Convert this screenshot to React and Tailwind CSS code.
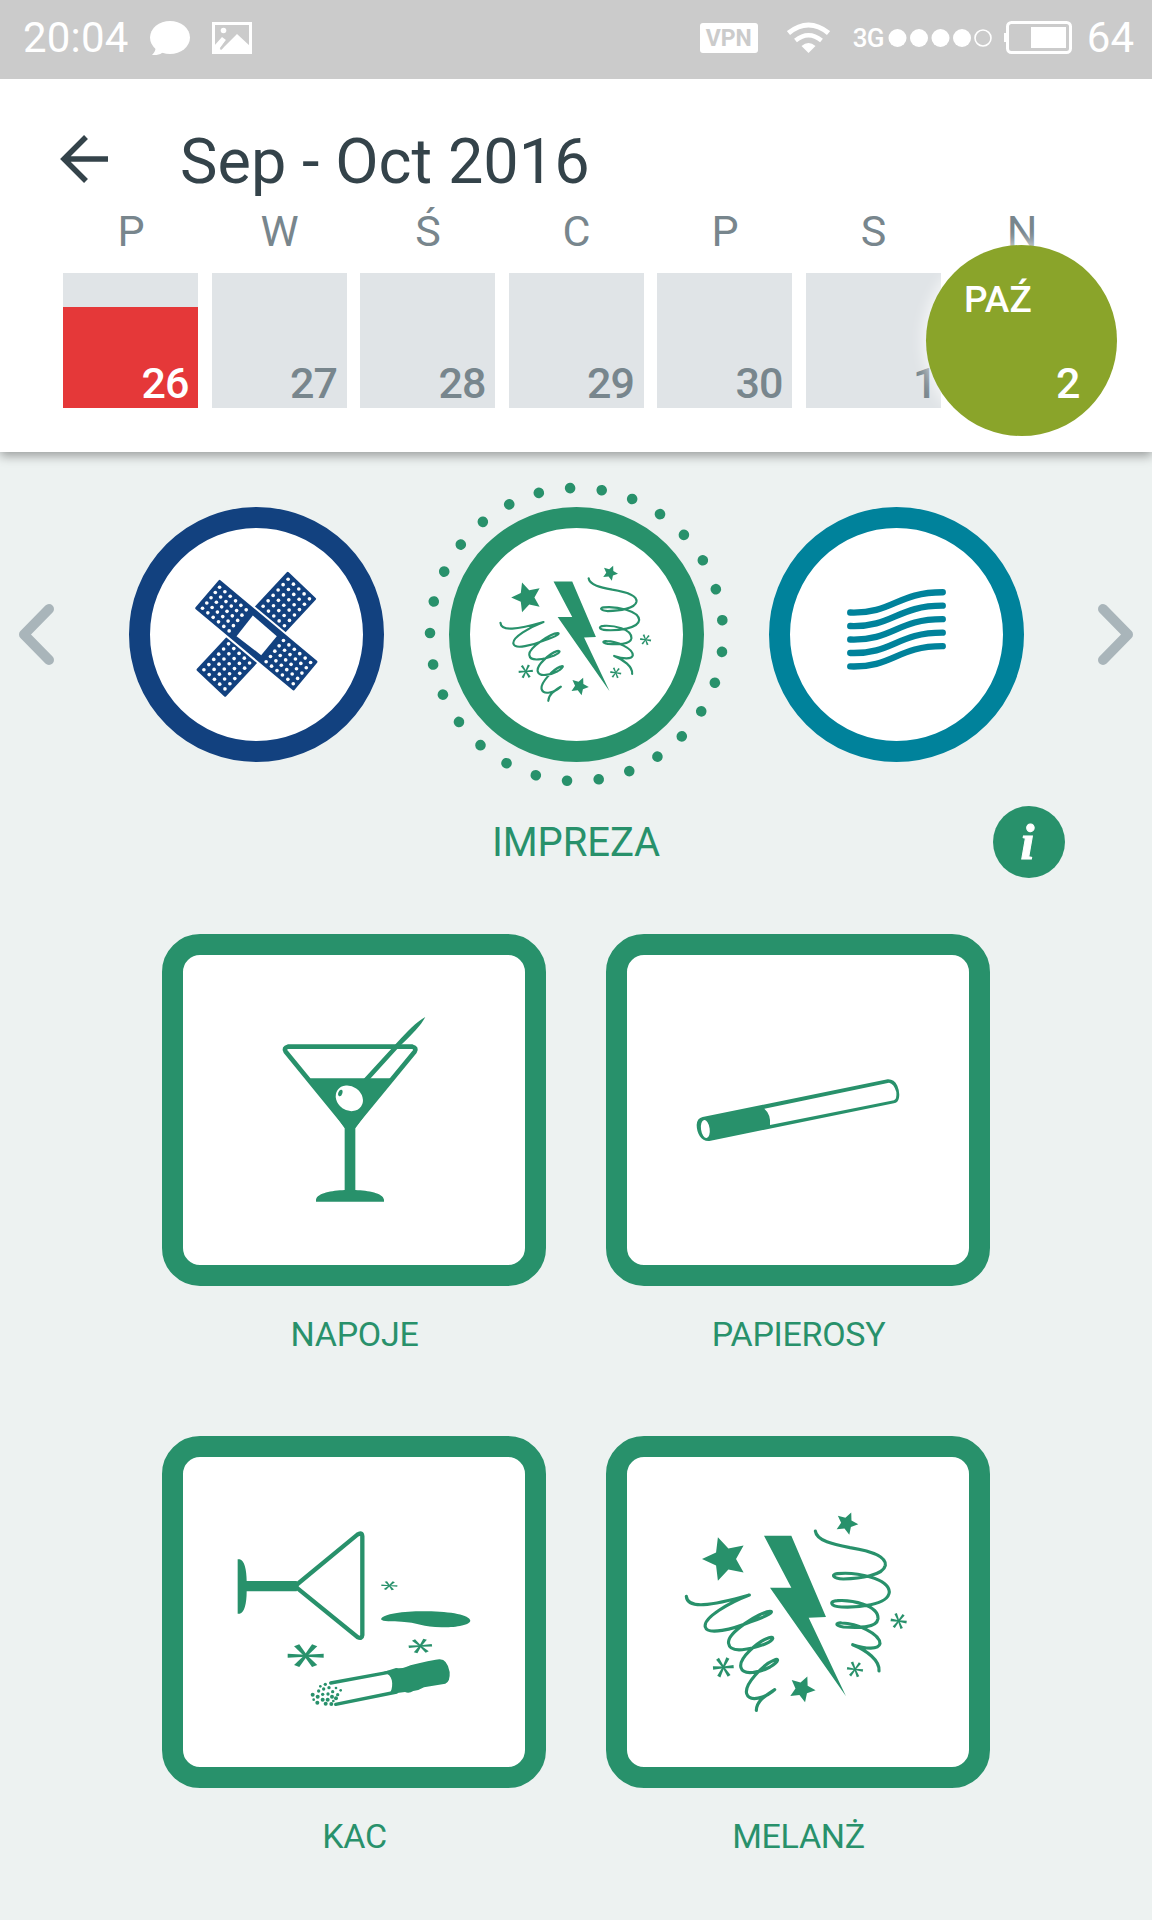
const GREEN = "#28916b";
const NAVY = "#12417f";
const TEAL = "#00829b";

const days = [
  { label: "P", num: "26", filled: true },
  { label: "W", num: "27" },
  { label: "Ś", num: "28" },
  { label: "C", num: "29" },
  { label: "P", num: "30" },
  { label: "S", num: "1" },
  { label: "N", num: "2", month: "PAŹ", selected: true },
];

function StatusBar() {
  return (
    <div className="relative z-10 h-[79px] bg-[#cbcbcb] flex items-center text-white text-[42px] leading-none pl-[23px] pr-[18px] pb-[4px]">
      <span className="w-[127px] pt-px tracking-[0.2px]">20:04</span>
      <svg className="w-10 h-[34px]" viewBox="0 0 40 34" fill="currentColor">
        <ellipse cx="20" cy="16.5" rx="20" ry="16.5" />
        <path d="M6 25 Q6 30 2 34 Q9 35 15 30 Z" />
      </svg>
      <svg className="w-10 h-8 ml-[22px]" viewBox="0 0 40 32">
        <rect x="1.5" y="1.5" width="37" height="29" fill="none" stroke="white" strokeWidth="3" />
        <circle cx="11.5" cy="8.5" r="2.8" fill="white" />
        <path d="M2 24 L10 15 L14 18 L8 26 L10 27 L25 12 L38 24 V31 H2 Z" fill="white" />
        <path d="M8.5 27.5 L14.5 19" stroke="#cbcbcb" strokeWidth="2" />
      </svg>
      <div className="ml-auto flex items-center">
        <span className="w-[58px] h-[30px] rounded-[3px] bg-white text-[#cbcbcb] text-[23px] leading-[31px] font-bold text-center">
          VPN
        </span>
        <svg className="w-[43px] h-8 ml-[29px]" viewBox="0 0 43 32" fill="none" stroke="white" strokeWidth="5">
          <path d="M1.5 11 Q21.5 -5 41.5 11" />
          <path d="M8.5 18.5 Q21.5 8 34.5 18.5" strokeWidth="4.5" />
          <path d="M14.5 24 Q21.5 18 28.5 24 L21.5 31 Z" fill="white" stroke="none" />
        </svg>
        <span className="ml-[23px] w-[34px] text-[26px] font-medium tracking-[-0.8px]">3G</span>
        <svg className="w-[105px] h-5 ml-[1px]" viewBox="0 0 105 20" fill="white">
          {[9.5, 31, 52.5, 74].map((cx) => (
            <circle key={cx} cx={cx} cy="10" r="9" />
          ))}
          <circle cx="95" cy="10" r="8" fill="none" stroke="white" strokeWidth="1.6" />
        </svg>
        <svg className="w-[68px] h-[33px] ml-[11px]" viewBox="0 0 68 33">
          <rect x="0" y="12" width="3" height="9" fill="white" />
          <rect x="3.5" y="1.5" width="63" height="30" rx="4" fill="none" stroke="white" strokeWidth="3" />
          <rect x="27" y="6" width="35" height="21" fill="white" />
        </svg>
        <span className="ml-[15px] pt-px">64</span>
      </div>
    </div>
  );
}

function DayCell({ day }) {
  return (
    <div className="w-[135px] flex flex-col items-center">
      <span className="h-[42px] leading-[42px] text-[43px] text-[#78868d] pl-[1px]">{day.label}</span>
      <div
        className={`relative mt-[21px] w-[135px] h-[135px] flex items-end justify-end pb-[3px] text-[43px] leading-none font-medium tracking-[-1px] ${
          day.selected ? "" : "bg-[#e0e4e7]"
        } ${day.filled || day.selected ? "text-white" : "text-[#78868d]"} ${day.num === "1" ? "pr-[4px]" : "pr-[9.5px]"}`}
      >
        {day.filled && <div className="absolute inset-x-0 bottom-0 h-[101px] bg-[#e53839]" />}
        {day.selected && (
          <>
            <div className="absolute -inset-7 rounded-full bg-[#8aa42a] shadow-[0_0_14px_3px_rgba(255,255,255,0.7)]" />
            <span className="absolute left-[10px] top-[7px] text-[37px] leading-[40px] tracking-normal">{day.month}</span>
          </>
        )}
        <span className="relative">{day.num}</span>
      </div>
    </div>
  );
}

function Header() {
  return (
    <header className="relative h-[373px] bg-white px-[63px] pt-10 shadow-[0_4px_10px_rgba(0,0,0,0.35)]">
      <div className="h-20 flex items-center">
        <svg className="w-12 h-12 -ml-[3px]" viewBox="0 0 48 48" fill="none" stroke="#34434a" strokeWidth="5.5">
          <path d="M48 24 H4 M26 2 L4 24 L26 46" />
        </svg>
        <h1 className="ml-[72px] pt-[5px] text-[63px] leading-none tracking-[0.05px] text-[#34434a]">Sep - Oct 2016</h1>
      </div>
      <div className="mt-[11px] flex justify-between">
        {days.map((d) => (
          <DayCell key={d.num} day={d} />
        ))}
      </div>
    </header>
  );
}

function Star({ cx, cy, r, rotate }) {
  const points = Array.from({ length: 10 }, (_, i) => {
    const a = ((rotate + i * 36) * Math.PI) / 180;
    const len = i % 2 ? r * 0.48 : r;
    return `${(cx + len * Math.cos(a)).toFixed(1)},${(cy + len * Math.sin(a)).toFixed(1)}`;
  });
  return <polygon points={points.join(" ")} />;
}

// six tapered arms; ry flattens the mark so it looks like it lies on the floor
function Burst({ cx, cy, rx, ry = rx, rotate = 0 }) {
  return (
    <g transform={`translate(${cx} ${cy}) scale(${rx / 30} ${ry / 30}) rotate(${rotate})`}>
      {[0, 60, 120, 180, 240, 300].map((a) => (
        <polygon key={a} points="0,-2.6 30,-5 30,5 0,2.6" transform={`rotate(${a})`} />
      ))}
    </g>
  );
}

function PartyArt({ transform }) {
  return (
    <g transform={transform} fill={GREEN}>
      <polygon points="282,106 364,106 468,350 416,352 528,588 300,262 364,262" />
      <Star cx={165} cy={176} r={69} rotate={180} />
      <Star cx={530} cy={69} r={35} rotate={5} />
      <Star cx={396} cy={566} r={41} rotate={5} />
      <Burst cx={160} cy={501} rx={31} rotate={-4} />
      <Burst cx={686} cy={362} rx={24} rotate={8} />
      <Burst cx={555} cy={507} rx={24} rotate={8} />
      <g fill="none" stroke={GREEN} strokeWidth="9.5" strokeLinecap="round" strokeLinejoin="round">
        <path d="M49 288 C52 326 120 318 238 284 C180 306 98 352 106 380 C112 406 190 386 240 365 C300 345 312 333 300 333 C272 334 168 398 176 430 C180 462 244 446 285 431 C318 416 310 408 297 412 C266 422 204 474 213 502 C220 527 270 516 300 500 C330 482 326 472 312 480 C280 492 222 552 230 580 C238 606 286 594 314 568 C286 586 260 602 259 630" />
        <path d="M436 92 C440 122 490 132 540 142 C590 150 650 165 646 195 C640 225 570 235 520 236 C486 234 484 222 502 220 C560 214 656 235 658 275 C655 315 560 322 515 320 C478 318 478 302 502 301 C545 298 626 314 624 355 C620 385 560 382 520 380 C493 376 497 366 515 368 C560 368 630 400 630 430 C625 450 585 445 548 433 C590 450 630 480 627 512" />
      </g>
    </g>
  );
}

// grid of perforation holes: origin plus nu steps of u and nv steps of v
const holes = [
  { o: [864, 328], u: [16, 14.7], v: [-15, 16.2], nu: 5, nv: 6 },
  { o: [685, 522], u: [15.8, 14.4], v: [-14.8, 15.6], nu: 5, nv: 6 },
  { o: [658, 352], u: [16, 13.6], v: [-12.8, 15.8], nu: 6, nv: 5 },
  { o: [850, 512], u: [16.3, 13.2], v: [-13, 16], nu: 6, nv: 5 },
];

function PlasterArt() {
  const pts = holes.flatMap(({ o, u, v, nu, nv }) =>
    Array.from({ length: nu * nv }, (_, k) => {
      const i = k % nu;
      const j = Math.floor(k / nu);
      return [o[0] + i * u[0] + j * v[0], o[1] + i * u[1] + j * v[1]];
    })
  );
  return (
    <svg className="w-full h-full" viewBox="449 174 640 640" strokeLinejoin="round">
      <polygon points="863,310 944,387 675,677 593,600" fill={NAVY} stroke={NAVY} strokeWidth="8" />
      <polygon points="658,334 948,576 880,658 589,415" fill="white" stroke="white" strokeWidth="20" />
      <polygon points="658,334 948,576 880,658 589,415" fill={NAVY} stroke={NAVY} strokeWidth="8" />
      <polygon points="758,437 830,499 783,556 709,499" fill="white" />
      {pts.map(([x, y], i) => (
        <circle key={i} cx={x} cy={y} r="5.5" fill="white" />
      ))}
    </svg>
  );
}

function WavesArt() {
  return (
    <svg className="w-full h-full" viewBox="120 174 640 640" fill="none" stroke={TEAL} strokeWidth="19" strokeLinecap="round">
      {[0, 40.5, 81, 121.5, 162].map((dy) => (
        <path key={dy} d="M301 428 C430 432 440 367 579 367" transform={`translate(0 ${dy})`} />
      ))}
    </svg>
  );
}

function MartiniArt() {
  return (
    <svg className="w-full h-full" viewBox="99 104 1026 930" fill={GREEN}>
      <path
        d="M414 379 H787 Q801 382 794 394 L600 630 L407 394 Q400 382 414 379 Z"
        fill="none"
        stroke={GREEN}
        strokeWidth="14"
      />
      <path d="M480 474 H724 L616 624 V809 C655 811 699 818 702 838 V844 H498 V838 C502 818 545 811 584 809 V624 Z" />
      <path d="M826 290 C800 304 770 335 742 366 L641 476 H660 L752 375 C785 344 812 316 826 290 Z" />
      <ellipse cx="598" cy="534" rx="43" ry="36" transform="rotate(35 598 534)" fill="white" />
      <ellipse cx="571" cy="518" rx="6" ry="10" transform="rotate(20 571 518)" />
    </svg>
  );
}

function CigaretteArt() {
  return (
    <svg className="w-full h-full" viewBox="111 104 1026 930" fill={GREEN}>
      <path d="M338 590 L893 477 Q912 476 922 496 Q930 515 927 532 Q924 547 912 549 L358 662 C335 664 320 640 320 614 Q321 593 338 590 Z" />
      <path d="M523 565 L897 487 Q912 490 919 515 Q921 536 912 540 L540 614 Q543 582 523 565 Z" fill="white" />
      <ellipse cx="346" cy="626" rx="13" ry="27" transform="rotate(-8 346 626)" fill="white" />
    </svg>
  );
}

const ash = [
  [526, 792, 5], [511, 798, 4], [537, 802, 5], [558, 803, 4], [572, 810, 4], [521, 806, 5],
  [506, 812, 5], [548, 814, 5], [488, 823, 6], [518, 822, 5], [534, 821, 5], [563, 823, 5],
  [503, 829, 6], [546, 829, 6], [491, 838, 4], [518, 838, 6], [533, 838, 6], [558, 834, 6],
  [550, 842, 4], [502, 847, 6], [527, 850, 6], [544, 851, 6],
];

function HangoverArt() {
  return (
    <svg className="w-full h-full" viewBox="99 110 1026 930" fill={GREEN}>
      <path d="M263 417 H269 C283 419 290 450 290 482 H440 L446 497 L440 513 H290 C290 550 283 578 269 580 H263 Z" />
      <path
        d="M439 494 L622 343 Q636 334 637 348 V644 Q636 657 622 650 L439 501"
        fill="none"
        stroke={GREEN}
        strokeWidth="13"
      />
      <path d="M693 597 C698 579 770 572 830 573 C905 574 958 584 961 601 C958 616 910 621 875 621 C820 620 800 606 755 604 C725 603 697 605 693 597 Z" />
      <Burst cx={467} cy={706} rx={54} ry={36} />
      <Burst cx={718} cy={496} rx={24} ry={14} rotate={4} />
      <Burst cx={811} cy={677} rx={35} ry={22} rotate={-6} />
      <path d="M542 788 L715 756 M557 852 L740 815" stroke={GREEN} strokeWidth="10" strokeLinecap="round" />
      <path d="M700 755 L738 743 Q755 745 770 739 C800 729 840 721 868 717 Q892 716 899 755 Q901 784 886 790 L822 801 Q808 810 790 812 Q777 820 765 815 L718 821 C730 806 731 770 712 761 Z" />
      {ash.map(([x, y, r]) => (
        <circle key={`${x}-${y}`} cx={x} cy={y} r={r} />
      ))}
    </svg>
  );
}

// 29 dots around the active category
function DotRing() {
  return (
    <svg className="absolute -inset-[46px] w-[305px] h-[305px]" viewBox="-152.5 -152.5 305 305" fill={GREEN}>
      {Array.from({ length: 29 }, (_, i) => (
        <circle key={i} cx="0" cy="-146.5" r="5.3" transform={`rotate(${-2.5 + (i * 360) / 29})`} />
      ))}
    </svg>
  );
}

function Chevron({ flip }) {
  return (
    <svg
      className={`w-[35px] h-[62px] ${flip ? "-scale-x-100" : ""}`}
      viewBox="0 0 35 62"
      fill="none"
      stroke="#a9b5ba"
      strokeWidth="10"
      strokeLinecap="round"
      strokeLinejoin="round"
    >
      <path d="M30 5 L5 30.5 L30 56" />
    </svg>
  );
}

function Carousel() {
  const ring = "relative w-[255px] h-[255px] rounded-full border-[21px] bg-white";
  return (
    <section className="mt-[55px] px-[19px] flex items-center justify-between">
      <Chevron />
      <div className="flex gap-[65px]">
        <div className={`${ring} border-[#12417f]`}>
          <PlasterArt />
        </div>
        <div className={`${ring} border-[#28916b]`}>
          <svg className="w-full h-full" viewBox="180 174 640 640">
            <PartyArt transform="translate(238 262) scale(0.6845)" />
          </svg>
          <DotRing />
        </div>
        <div className={`${ring} border-[#00829b]`}>
          <WavesArt />
        </div>
      </div>
      <Chevron flip />
    </section>
  );
}

const options = [
  { label: "NAPOJE", art: <MartiniArt /> },
  { label: "PAPIEROSY", art: <CigaretteArt /> },
  { label: "KAC", art: <HangoverArt /> },
  {
    label: "MELANŻ",
    art: (
      <svg className="w-full h-full" viewBox="111 110 1026 930">
        <PartyArt transform="translate(240 240)" />
      </svg>
    ),
  },
];

export default function App() {
  return (
    <div className="w-[1152px] h-[1920px] overflow-hidden bg-[#edf2f1] font-['Roboto',sans-serif]">
      <StatusBar />
      <Header />
      <Carousel />

      <div className="mt-11 grid grid-cols-3 items-center pr-[87px] pl-[87px] text-[#28916b]">
        <h2 className="col-start-2 text-center text-[40px] leading-none pt-[2px] tracking-[-0.1px]">IMPREZA</h2>
        <button className="justify-self-end w-[72px] h-[72px] rounded-full bg-[#28916b] text-white font-['Liberation_Serif',serif] font-bold italic text-[50px] leading-[70px] pr-[3px] [-webkit-text-stroke:1px_white]">
          i
        </button>
      </div>

      <div className="mt-14 ml-[162px] w-[828px] grid grid-cols-2 gap-x-[60px] gap-y-[82px]">
        {options.map((o) => (
          <div key={o.label} className="flex flex-col items-center">
            <div className="w-[384px] h-[352px] rounded-[38px] border-[21px] border-[#28916b] bg-white">{o.art}</div>
            <span className="mt-7 h-10 leading-10 text-[34px] tracking-[-0.3px] text-[#28916b] pl-[1px]">{o.label}</span>
          </div>
        ))}
      </div>
    </div>
  );
}
